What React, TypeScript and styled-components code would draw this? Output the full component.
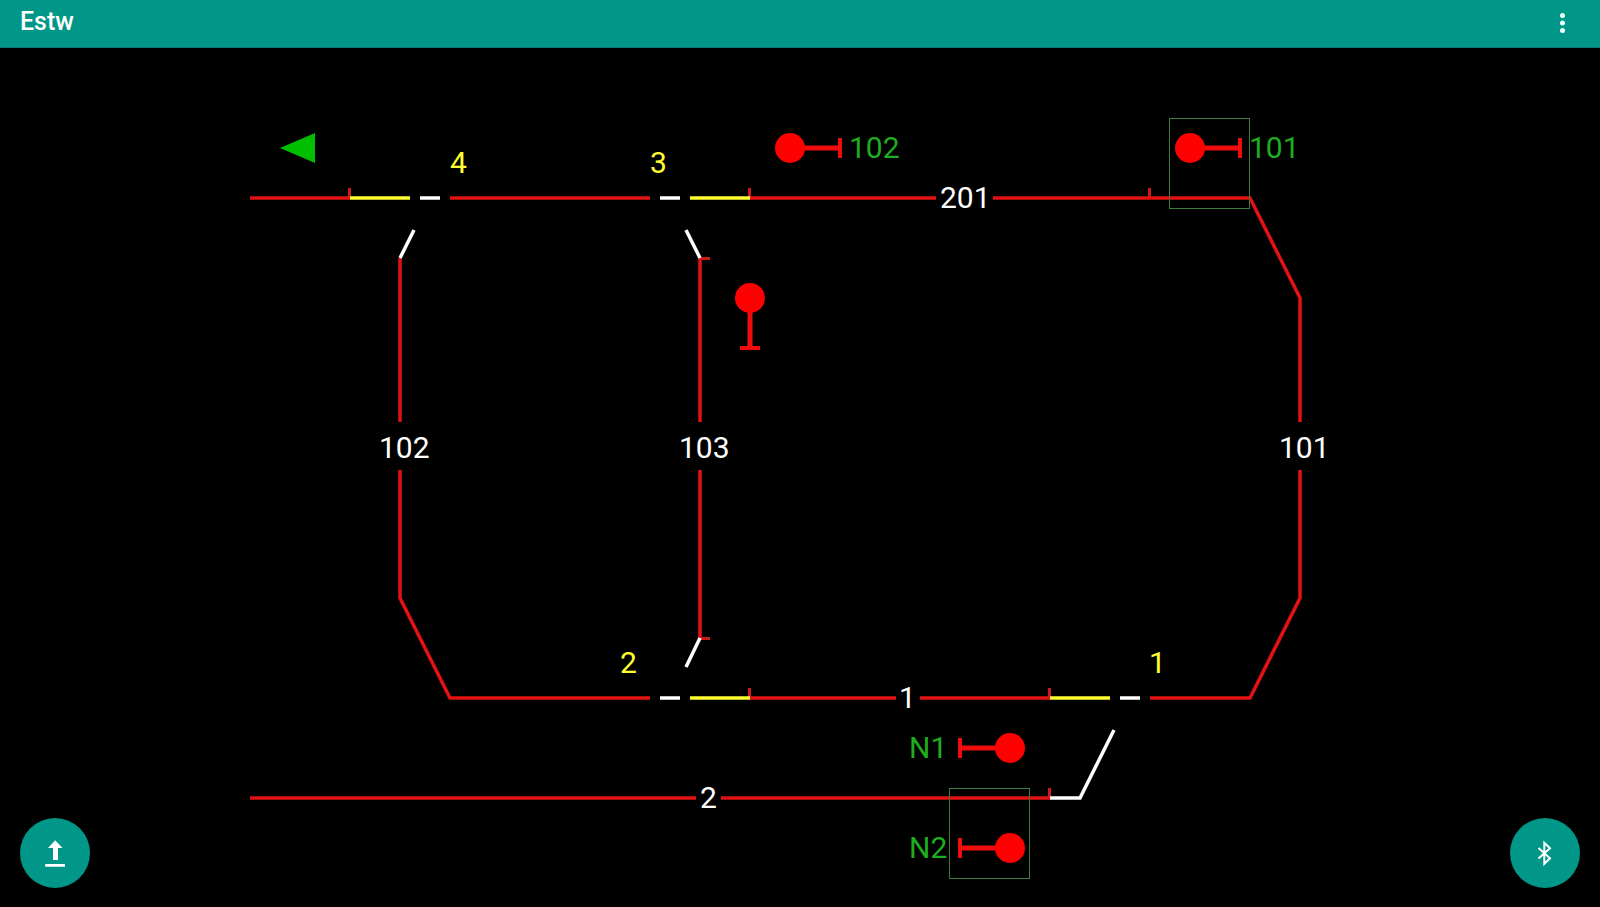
import React from "react";
import styled, { createGlobalStyle } from "styled-components";

const color = {
  teal: "#009688",
  tealEdge: "#0a7d72",
  track: "#e31212",
  mark: "#cc1a1a",
  stem: "#ee0c0c",
  lamp: "#ff0000",
  route: "#ffff32",
  name: "#1fac1f",
  arrow: "#00be00",
  frame: "#3f7a3f",
};

const GlobalStyle = createGlobalStyle`
  * { box-sizing: border-box; }
  body {
    margin: 0;
    background: #000;
    font-family: Roboto, "Liberation Sans", sans-serif;
  }
`;

const Screen = styled.div`
  position: relative;
  display: flex;
  flex-direction: column;
  min-height: 100vh;
  background: #000;
`;

const AppBar = styled.header`
  display: flex;
  justify-content: space-between;
  height: 48px;
  padding: 0 20px;
  background: ${color.teal};
  border-bottom: 1px solid ${color.tealEdge};
`;

const Title = styled.h1`
  margin: 0;
  color: #fff;
  font-size: 25px;
  font-weight: 500;
  line-height: 44px;
`;

const MenuButton = styled.button`
  display: grid;
  place-items: center;
  width: 35px;
  height: 46px;
  padding: 0;
  border: 0;
  background: none;
  color: #f0fffd;
  cursor: pointer;
`;

const Panel = styled.main`
  display: flex;
  flex: 1;
  flex-direction: column;
`;

const Diagram = styled.svg`
  display: block;
  width: 100%;
  height: auto;
`;

const Line = styled.polyline<{ $color?: string; $width?: number }>`
  fill: none;
  stroke: ${(p) => p.$color ?? color.track};
  stroke-width: ${(p) => p.$width ?? 3.5};
`;

const Label = styled.text<{ $color: string }>`
  fill: ${(p) => p.$color};
  font-size: 30px;
`;

const Frame = styled.rect`
  fill: none;
  stroke: ${color.frame};
  stroke-width: 1;
`;

const RoundButton = styled.button<{ $side: "left" | "right" }>`
  position: absolute;
  bottom: 19px;
  ${(p) => p.$side}: 20px;
  display: grid;
  place-items: center;
  width: 70px;
  height: 70px;
  padding: 0;
  border: 0;
  border-radius: 50%;
  background: ${color.teal};
  color: #fff;
  cursor: pointer;
`;

const tracks = [
  "250,150 350,150",
  "450,150 650,150",
  "750,150 936,150",
  "993,150 1250,150 1300,250 1300,374",
  "1300,422 1300,550 1250,650 1150,650",
  "920,650 1050,650",
  "750,650 896,650",
  "650,650 450,650 400,550 400,422",
  "400,374 400,210",
  "700,210 700,374",
  "700,422 700,590",
  "250,750 696,750",
  "721,750 1050,750",
];

const setRoutes = ["350,150 410,150", "690,150 750,150", "690,650 750,650", "1050,650 1110,650"];

const points = [
  "420,150 440,150",
  "660,150 680,150",
  "660,650 680,650",
  "1120,650 1140,650",
  "400,210 414,182",
  "700,210 686,182",
  "700,590 686,619",
  "1050,750 1080,750 1114,682",
];

const marks = [
  "349.5,140 349.5,151",
  "749.5,140 749.5,151",
  "1149.5,140 1149.5,151",
  "749.5,640 749.5,651",
  "1049.5,640 1049.5,651",
  "1049.5,740 1049.5,751",
  "700,210.5 710,210.5",
  "700,590.5 710,590.5",
];

const labels = [
  { text: "201", x: 940, y: 160, fill: "#fff" },
  { text: "102", x: 379, y: 410, fill: "#fff" },
  { text: "103", x: 679, y: 410, fill: "#fff" },
  { text: "101", x: 1279, y: 410, fill: "#fff" },
  { text: "1", x: 899, y: 660, fill: "#fff" },
  { text: "2", x: 700, y: 760, fill: "#fff" },
  { text: "4", x: 450, y: 125, fill: color.route },
  { text: "3", x: 650, y: 125, fill: color.route },
  { text: "2", x: 620, y: 625, fill: color.route },
  { text: "1", x: 1149, y: 625, fill: color.route },
  { text: "102", x: 849, y: 110, fill: color.name },
  { text: "101", x: 1249, y: 110, fill: color.name },
  { text: "N1", x: 909, y: 710, fill: color.name },
  { text: "N2", x: 909, y: 810, fill: color.name },
];

const signals = [
  { x: 790, y: 100, angle: 0 },
  { x: 1190, y: 100, angle: 0 },
  { x: 750, y: 250, angle: 90 },
  { x: 1010, y: 700, angle: 180 },
  { x: 1010, y: 800, angle: 180 },
];

function Signal({ x, y, angle }: { x: number; y: number; angle: number }) {
  return (
    <g transform={`translate(${x} ${y}) rotate(${angle})`}>
      <Line points="0,0 50,0" $color={color.stem} $width={5} />
      <Line points="50,-10 50,10" $color={color.stem} $width={4} />
      <circle r="15" fill={color.lamp} />
    </g>
  );
}

export default function App() {
  return (
    <Screen>
      <GlobalStyle />
      <AppBar>
        <Title>Estw</Title>
        <MenuButton type="button" aria-label="More options">
          <svg width="5" height="20" viewBox="0 0 5 20" fill="currentColor">
            <circle cx="2.5" cy="2.5" r="2.5" />
            <circle cx="2.5" cy="10" r="2.5" />
            <circle cx="2.5" cy="17.5" r="2.5" />
          </svg>
        </MenuButton>
      </AppBar>
      <Panel>
        <Diagram viewBox="0 0 1600 859" role="img" aria-label="Track diagram">
          {marks.map((p) => (
            <Line key={p} points={p} $color={color.mark} $width={3} />
          ))}
          {tracks.map((p) => (
            <Line key={p} points={p} />
          ))}
          {setRoutes.map((p) => (
            <Line key={p} points={p} $color={color.route} />
          ))}
          {points.map((p) => (
            <Line key={p} points={p} $color="#fff" />
          ))}
          <polygon points="280,100 315,85 315,115" fill={color.arrow} />
          {signals.map((s) => (
            <Signal key={`${s.x}-${s.y}`} {...s} />
          ))}
          <Frame x="1169.5" y="70.5" width="80" height="90" />
          <Frame x="949.5" y="740.5" width="80" height="90" />
          {labels.map((l) => (
            <Label key={`${l.x}-${l.y}`} x={l.x} y={l.y} $color={l.fill}>
              {l.text}
            </Label>
          ))}
        </Diagram>
      </Panel>
      <RoundButton type="button" $side="left" aria-label="Upload">
        <svg width="30" height="30" viewBox="0 0 30 30" fill="currentColor">
          <path d="M15.2 2.3L22.5 10H18V22H13V10H8ZM5.2 26H25V28.8H5.2Z" />
        </svg>
      </RoundButton>
      <RoundButton type="button" $side="right" aria-label="Bluetooth">
        <svg width="30" height="30" viewBox="0 0 30 30" fill="none" stroke="currentColor" strokeWidth="2">
          <path d="M8.5 10L20 20.2L14.3 25.8V4.8L20 10.2L8.5 20.5" />
        </svg>
      </RoundButton>
    </Screen>
  );
}
